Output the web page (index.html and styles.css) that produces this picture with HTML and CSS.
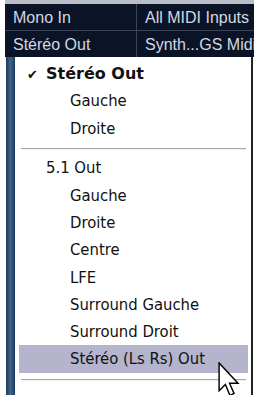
FILE: index.html
```html
<!DOCTYPE html>
<html lang="fr">
<head>
    <meta charset="UTF-8">
    <link rel="stylesheet" href="styles.css">
    <title>Sorties</title>
</head>
<body>
    <div class="top-strip"></div>
    <div class="track-table">
        <div class="cell name">Mono In</div>
        <div class="cell">All MIDI Inputs</div>
        <div class="cell name">Stéréo Out</div>
        <div class="cell">Synth...GS Midi</div>
    </div>
    <div class="lower">
        <div class="track-bar"></div>
        <div class="menu">
            <div class="item checked"><span class="check">✔</span>Stéréo Out</div>
            <div class="item sub">Gauche</div>
            <div class="item sub">Droite</div>
            <div class="sep"></div>
            <div class="item">5.1 Out</div>
            <div class="item sub">Gauche</div>
            <div class="item sub">Droite</div>
            <div class="item sub">Centre</div>
            <div class="item sub">LFE</div>
            <div class="item sub">Surround Gauche</div>
            <div class="item sub">Surround Droit</div>
            <div class="item sub active">Stéréo (Ls Rs) Out</div>
            <div class="sep"></div>
        </div>
        <svg class="cursor" width="22" height="36" viewBox="0 0 12 20">
            <path d="M0.5 0.5 L0.5 16 L4 12.5 L6.5 18.5 L8.8 17.5 L6.3 11.8 L11 11.8 Z" fill="#fff" stroke="#000" stroke-width="0.8" stroke-linejoin="miter"/>
        </svg>
    </div>
</body>
</html>
```

FILE: styles.css
```css
body {
    margin: 0;
    padding: 0;
    background-color: white;
    font-family: "DejaVu Sans Condensed", "DejaVu Sans", sans-serif;
    width: 254px;
    height: 395px;
    overflow: hidden;
}

.top-strip {
    height: 4px;
    background-color: #b9bec8;
    margin-left: 5px;
}

.track-table {
    display: grid;
    grid-template-columns: 132px 1fr;
    margin-left: 5px;
    background-color: #0b1426;
}

.cell {
    height: 26px;
    line-height: 27px;
    color: #d2d8e2;
    font-family: "Liberation Sans", Arial, sans-serif;
    font-size: 16px;
    padding-left: 8px;
    white-space: nowrap;
    overflow: hidden;
    border-bottom: 1px solid #3b465a;
}

.cell.name {
    border-right: 1px solid #3b465a;
}

.track-table .cell:nth-child(n+3) {
    border-bottom: none;
}

.lower {
    display: flex;
    position: relative;
    height: 340px;
}

.track-bar {
    width: 9px;
    margin-left: 6px;
    background: linear-gradient(to right, #1d3b5c, #3f6488, #1d3b5c);
}

.menu {
    width: 229px;
    border-right: 2px solid #222;
    padding: 3px 3px 0 4px;
    font-size: 16.5px;
    color: #111;
}

.item {
    height: 27.3px;
    line-height: 27.3px;
    padding-left: 27px;
    white-space: nowrap;
}

.item.sub {
    padding-left: 51px;
}

.item.checked {
    font-family: "DejaVu Sans", sans-serif;
    font-weight: bold;
    font-size: 16px;
    padding-left: 8px;
}

.check {
    display: inline-block;
    width: 19px;
    font-size: 13px;
}

.item.active {
    background-color: #b4b4cc;
}

.sep {
    height: 1px;
    margin: 6px 2px 4.5px 2px;
    background-color: #a8a8a8;
    border-bottom: 1px solid #f0f0f0;
}

.cursor {
    position: absolute;
    left: 218px;
    top: 305px;
}
```
